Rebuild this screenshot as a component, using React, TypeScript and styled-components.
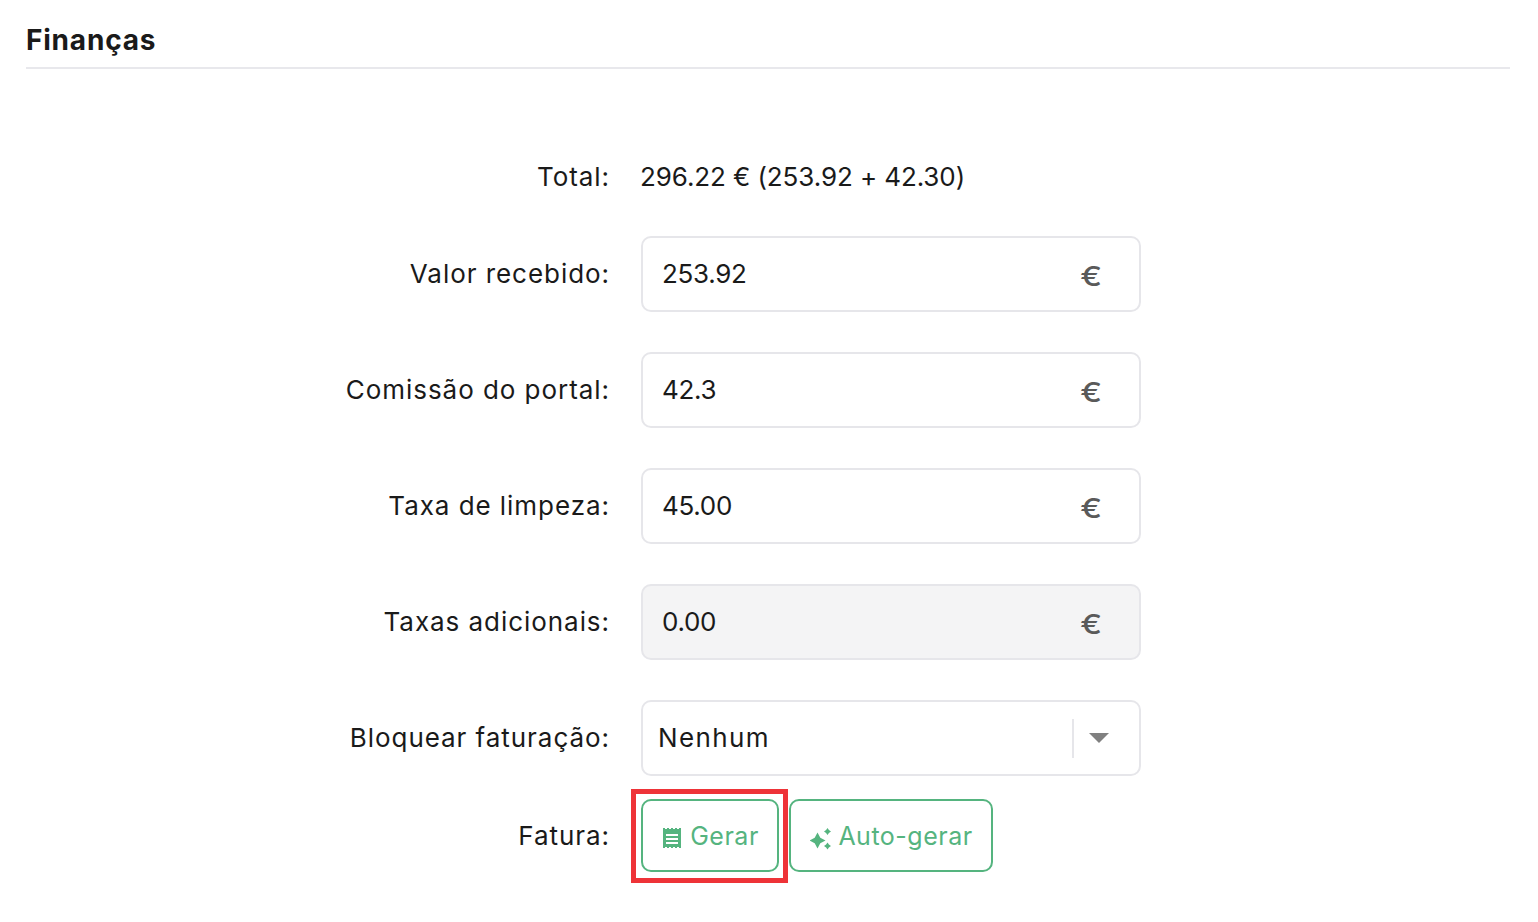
import React from "react";
import styled, { createGlobalStyle } from "styled-components";

const Global = createGlobalStyle`
  html, body { margin: 0; padding: 0; background: #fff; }
  body { font-family: "Inter", "Liberation Sans", sans-serif; color: #1a1a1a; }
`;

const Page = styled.main`
  width: 1538px;
  height: 922px;
  box-sizing: border-box;
  padding: 0 28px 0 26px;
  overflow: hidden;
`;

const Header = styled.h2`
  margin: 0;
  height: 69px;
  box-sizing: border-box;
  padding-top: 21px;
  border-bottom: 2px solid #e8e8ec;
  font-size: 28px;
  line-height: 38px;
  font-weight: 700;
  letter-spacing: 0.8px;
  color: #1a1a1a;
`;

const Form = styled.div`
  display: flex;
  flex-direction: column;
  padding-top: 84px;
`;

const Row = styled.div<{ $h: number; $mb: number }>`
  display: flex;
  align-items: center;
  gap: 31px;
  height: ${(p) => p.$h}px;
  margin-bottom: ${(p) => p.$mb}px;
`;

const Label = styled.label`
  width: 584px;
  text-align: right;
  font-size: 26px;
  line-height: 36px;
  letter-spacing: 0.95px;
  white-space: nowrap;
`;

const Value = styled.div`
  font-size: 26px;
  line-height: 36px;
  letter-spacing: -0.1px;
  margin-left: -1px;
`;

const Field = styled.div<{ $disabled?: boolean }>`
  width: 500px;
  height: 76px;
  box-sizing: border-box;
  display: flex;
  align-items: center;
  padding: 0 37px 0 19px;
  border: 2px solid #e6e6ea;
  border-radius: 10px;
  background: ${(p) => (p.$disabled ? "#f4f4f5" : "#fff")};
  font-size: 26px;
`;

const FieldText = styled.span<{ $spacing?: number }>`
  flex: 1;
  position: relative;
  top: -1px;
  letter-spacing: ${(p) => p.$spacing ?? -0.3}px;
`;

const Euro = styled.span`
  font-size: 27px;
  line-height: 30px;
  font-weight: 500;
  color: #5a5a5a;
  position: relative;
  top: 3px;
  transform: scaleX(1.2);
  transform-origin: right center;
`;

const SelectBox = styled(Field)`
  padding: 0 30px 0 15px;
`;

const Divider = styled.span`
  width: 2px;
  height: 39px;
  background: #e6e6ea;
  margin-right: 15px;
`;

const Caret = styled.span`
  width: 0;
  height: 0;
  border-left: 10px solid transparent;
  border-right: 10px solid transparent;
  border-top: 10px solid #808080;
`;

const Buttons = styled.div`
  display: flex;
  gap: 10px;
`;

const Btn = styled.button<{ $w: number; $gap: number; $mark?: boolean }>`
  position: relative;
  width: ${(p) => p.$w}px;
  height: 73px;
  box-sizing: border-box;
  display: flex;
  align-items: center;
  justify-content: center;
  gap: ${(p) => p.$gap}px;
  padding: 0;
  background: #fff;
  border: 2px solid #55b47f;
  border-radius: 10px;
  color: #55b47f;
  font: inherit;
  font-size: 25px;
  letter-spacing: 0.5px;
  ${(p) =>
    p.$mark
      ? `&::after {
          content: "";
          position: absolute;
          left: -12px;
          top: -12px;
          width: 157px;
          height: 94px;
          box-sizing: border-box;
          border: 5px solid #ee3338;
        }`
      : ""}
`;

const ReceiptSvg = styled.svg`
  margin: 4px 0 0 2px;
`;

const SparkSvg = styled.svg`
  margin: 6px 0 0 1px;
`;

const ReceiptIcon = () => (
  <ReceiptSvg width="18" height="20" viewBox="0 0 18 20">
    <path
      fill="#55b47f"
      fillRule="evenodd"
      d="M0 0h2v1h2V0h2v1h2V0h2v1h2V0h2v1h2V0h2v20h-2v-1h-2v1h-2v-1h-2v1H8v-1H6v1H4v-1H2v1H0z M3 6v2h12V6z M3 10v2h12v-2z M3 14v2h12v-2z"
    />
  </ReceiptSvg>
);

const SparkIcon = () => (
  <SparkSvg width="22" height="22" viewBox="0 0 22 22">
    <path
      fill="#55b47f"
      d="M7.500 4.500l2.800 5.200 5.200 2.800-5.200 2.800-2.800 5.200-2.800-5.200-5.200-2.800 5.200-2.800z
         M17.500 0l1.400 2.100 2.100 1.400-2.100 1.400-1.400 2.100-1.400-2.100-2.100-1.400 2.100-1.400z
         M17.500 14.500l1.400 2.100 2.100 1.400-2.100 1.400-1.400 2.100-1.400-2.100-2.100-1.400 2.100-1.400z"
    />
  </SparkSvg>
);

const inputs: { label: string; value: string; disabled?: boolean }[] = [
  { label: "Valor recebido:", value: "253.92" },
  { label: "Comissão do portal:", value: "42.3" },
  { label: "Taxa de limpeza:", value: "45.00" },
  { label: "Taxas adicionais:", value: "0.00", disabled: true },
];

export default function App() {
  return (
    <Page>
      <Global />
      <Header>Finanças</Header>
      <Form>
        <Row $h={48} $mb={35}>
          <Label>Total:</Label>
          <Value>296.22 € (253.92 + 42.30)</Value>
        </Row>
        {inputs.map((i) => (
          <Row key={i.label} $h={76} $mb={40}>
            <Label>{i.label}</Label>
            <Field $disabled={i.disabled}>
              <FieldText>{i.value}</FieldText>
              <Euro>€</Euro>
            </Field>
          </Row>
        ))}
        <Row $h={76} $mb={23}>
          <Label>Bloquear faturação:</Label>
          <SelectBox>
            <FieldText $spacing={1.4}>Nenhum</FieldText>
            <Divider />
            <Caret />
          </SelectBox>
        </Row>
        <Row $h={73} $mb={0}>
          <Label>Fatura:</Label>
          <Buttons>
            <Btn $w={138} $gap={9} $mark>
              <ReceiptIcon />
              Gerar
            </Btn>
            <Btn $w={204} $gap={6}>
              <SparkIcon />
              Auto-gerar
            </Btn>
          </Buttons>
        </Row>
      </Form>
    </Page>
  );
}
